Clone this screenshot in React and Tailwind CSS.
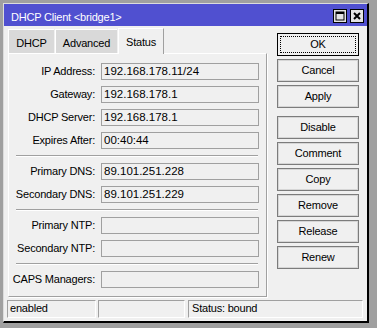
import React from "react";

const topRows = [
  { label: "IP Address:", value: "192.168.178.11/24" },
  { label: "Gateway:", value: "192.168.178.1" },
  { label: "DHCP Server:", value: "192.168.178.1" },
  { label: "Expires After:", value: "00:40:44" },
];
const dnsRows = [
  { label: "Primary DNS:", value: "89.101.251.228" },
  { label: "Secondary DNS:", value: "89.101.251.229" },
];
const ntpRows = [
  { label: "Primary NTP:", value: "" },
  { label: "Secondary NTP:", value: "" },
];

const Row = ({ label, value }) => (
  <div className="flex items-center h-[17px]">
    <div className="w-[87px] text-right pr-px whitespace-nowrap">{label}</div>
    <div className="ml-[5px] w-[158px] h-[17px] border border-[#a0a0a0] pl-[2px] leading-[15px] whitespace-nowrap text-[11.5px] tracking-normal">
      {value}
    </div>
  </div>
);

const Separator = () => (
  <div className="ml-[7px] mr-[8px] my-[6px] h-[2px] border-t border-[#a0a0a0] border-b border-b-white" />
);

const Btn = ({ children, focused, className = "" }) => (
  <div
    className={`h-[23px] w-[82px] flex items-center justify-center ${
      focused
        ? "border border-black"
        : "border border-[#7c7c7c] shadow-[inset_0_0_0_1px_#d6d6d6]"
    } ${className}`}
  >
    {focused ? (
      <div className="w-[76px] h-[17px] border border-dotted border-black flex items-center justify-center">
        {children}
      </div>
    ) : (
      children
    )}
  </div>
);

export default function App() {
  return (
    <div
      className="w-[377px] h-[328px] bg-[#a0a0a0] pt-[3px] pl-[3px] text-[11px] tracking-[-0.2px] text-black overflow-hidden"
      style={{ fontFamily: '"Liberation Sans", Arial, sans-serif' }}
    >
      <div className="w-[366px] h-[320px] border-t border-l border-[#dcdcdc] border-r-2 border-b-2 border-r-black border-b-black bg-[#f0f0f0] flex flex-col">
        {/* title bar */}
        <div className="h-[22px] bg-[#5050d0] flex items-start pt-[5px] pl-[7px] pr-[3px]">
          <div className="mt-px leading-[14px] text-white flex-1 whitespace-nowrap">
            DHCP Client &lt;bridge1&gt;
          </div>
          <div className="flex gap-[3px]">
            <div className="w-[14px] h-[14px] border border-black bg-[#e4e4e4] flex items-center justify-center">
              <svg width="10" height="10" viewBox="0 0 10 10">
                <rect x="1" y="1" width="8" height="8" fill="none" stroke="#000" strokeWidth="1" />
                <rect x="1" y="1" width="8" height="2" fill="#000" />
              </svg>
            </div>
            <div className="w-[14px] h-[14px] border border-black bg-[#e4e4e4] flex items-center justify-center">
              <svg width="10" height="10" viewBox="0 0 10 10">
                <path d="M2 2 L8 8 M8 2 L2 8" stroke="#000" strokeWidth="2" />
              </svg>
            </div>
          </div>
        </div>

        {/* body */}
        <div className="flex pt-[2px] pl-[4px]">
          <div className="w-[259px] flex flex-col">
            <div className="flex items-end h-[25px]">
              <div className="w-[46px] h-[24px] bg-[#d9d9d9] border-t border-l border-white flex items-center justify-center pt-[3px]">
                DHCP
              </div>
              <div className="ml-[1px] w-[62px] h-[24px] bg-[#d9d9d9] border-t border-l border-white flex items-center justify-center pt-[3px]">
                Advanced
              </div>
              <div className="ml-[1px] w-[46px] h-[26px] -mb-px relative z-10 bg-[#f0f0f0] border-t border-l border-white border-r border-r-[#a0a0a0] flex items-center justify-center pt-px">
                Status
              </div>
            </div>
            <div className="h-[244px] border-t border-l border-white border-r border-b border-r-[#a0a0a0] border-b-[#a0a0a0] shadow-[1px_1px_0_#ffffff] pt-[9px]">
              <div className="flex flex-col gap-[6px]">
                {topRows.map((r) => (
                  <Row key={r.label} {...r} />
                ))}
              </div>
              <Separator />
              <div className="flex flex-col gap-[6px]">
                {dnsRows.map((r) => (
                  <Row key={r.label} {...r} />
                ))}
              </div>
              <Separator />
              <div className="flex flex-col gap-[6px]">
                {ntpRows.map((r) => (
                  <Row key={r.label} {...r} />
                ))}
              </div>
              <Separator />
              <Row label="CAPS Managers:" value="" />
            </div>
          </div>

          <div className="ml-[10px] mt-[5px] flex flex-col gap-[3px]">
            <Btn focused>OK</Btn>
            <Btn>Cancel</Btn>
            <Btn>Apply</Btn>
            <Btn className="mt-[5px]">Disable</Btn>
            <Btn>Comment</Btn>
            <Btn>Copy</Btn>
            <Btn>Remove</Btn>
            <Btn>Release</Btn>
            <Btn>Renew</Btn>
          </div>
        </div>

        {/* status bar */}
        <div className="flex mt-[3px] ml-[3px] h-[18px]">
          <div className="w-[89px] border-t border-l border-[#a0a0a0] border-b border-r border-b-white border-r-white pl-[2px] leading-[15px]">
            enabled
          </div>
          <div className="ml-[2px] w-[87px] border-t border-l border-[#a0a0a0] border-b border-r border-b-white border-r-white" />
          <div className="ml-[3px] w-[175px] border-t border-l border-[#a0a0a0] border-b border-r border-b-white border-r-white pl-[3px] leading-[15px]">
            Status: bound
          </div>
        </div>
      </div>
    </div>
  );
}
